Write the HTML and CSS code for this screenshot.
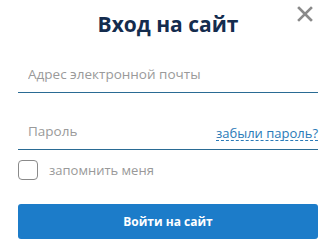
FILE: index.html
```html
<!DOCTYPE html>
<html lang="ru">
<head>
    <meta charset="UTF-8" />
    <title>Вход на сайт</title>
    <link rel="stylesheet" href="styles.css">
</head>
<body>
<div class="login">
    <button type="button" class="close-btn" aria-label="Закрыть">
        <svg width="16" height="16" viewBox="0 0 16 16">
            <path d="M2 2 L14 14 M14 2 L2 14" stroke="#8a8a8a" stroke-width="2.6" stroke-linecap="square" />
        </svg>
    </button>
    <h1>Вход на сайт</h1>
    <form class="login-form">
        <div class="field">
            <input type="email" placeholder="Адрес электронной почты" />
        </div>
        <div class="field">
            <input type="password" placeholder="Пароль" />
            <a href="#" class="forgot">забыли пароль?</a>
        </div>
        <label class="remember">
            <input type="checkbox" />
            <span class="box"></span>
            запомнить меня
        </label>
        <button type="submit" class="submit-btn">Войти на сайт</button>
    </form>
</div>
</body>
</html>
```

FILE: styles.css
```css
* {
    box-sizing: border-box;
    margin: 0;
    padding: 0;
}

body {
    font-family: "Open Sans", "Liberation Sans", sans-serif;
    background: #fff;
}

.login {
    position: relative;
    padding: 8px 11px 0 18px;
}

.close-btn {
    position: absolute;
    top: 6px;
    right: 16px;
    background: none;
    border: none;
    cursor: pointer;
    line-height: 0;
}

h1 {
    text-align: center;
    font-size: 21px;
    font-weight: 700;
    color: #142c4e;
    line-height: 32px;
}

.login-form {
    margin-top: 22px;
}

.field {
    display: flex;
    align-items: flex-end;
    border-bottom: 1px solid #2a6b94;
    height: 31px;
    margin-bottom: 26px;
}

.field input {
    flex: 1;
    border: none;
    outline: none;
    font-family: inherit;
    font-size: 13.5px;
    color: #333;
    padding: 0 0 9px 10px;
    background: transparent;
    min-width: 0;
}

.field input::placeholder {
    color: #9a9a9a;
}

.forgot {
    font-size: 13px;
    color: #2a7ab8;
    text-decoration: none;
    border-bottom: 1px dashed #2a7ab8;
    line-height: 14px;
    margin-bottom: 8px;
}

.remember {
    display: flex;
    align-items: center;
    gap: 11px;
    font-size: 13px;
    color: #999;
    margin-top: -16px;
    cursor: pointer;
}

.remember input {
    display: none;
}

.box {
    width: 20px;
    height: 20px;
    border: 1px solid #8a8a8a;
    border-radius: 4px;
}

.submit-btn {
    display: block;
    width: 300px;
    height: 35px;
    margin-top: 24px;
    background: #1c7cc9;
    color: #fff;
    border: none;
    border-radius: 3px;
    font-family: inherit;
    font-size: 12px;
    font-weight: 700;
    cursor: pointer;
}
```
